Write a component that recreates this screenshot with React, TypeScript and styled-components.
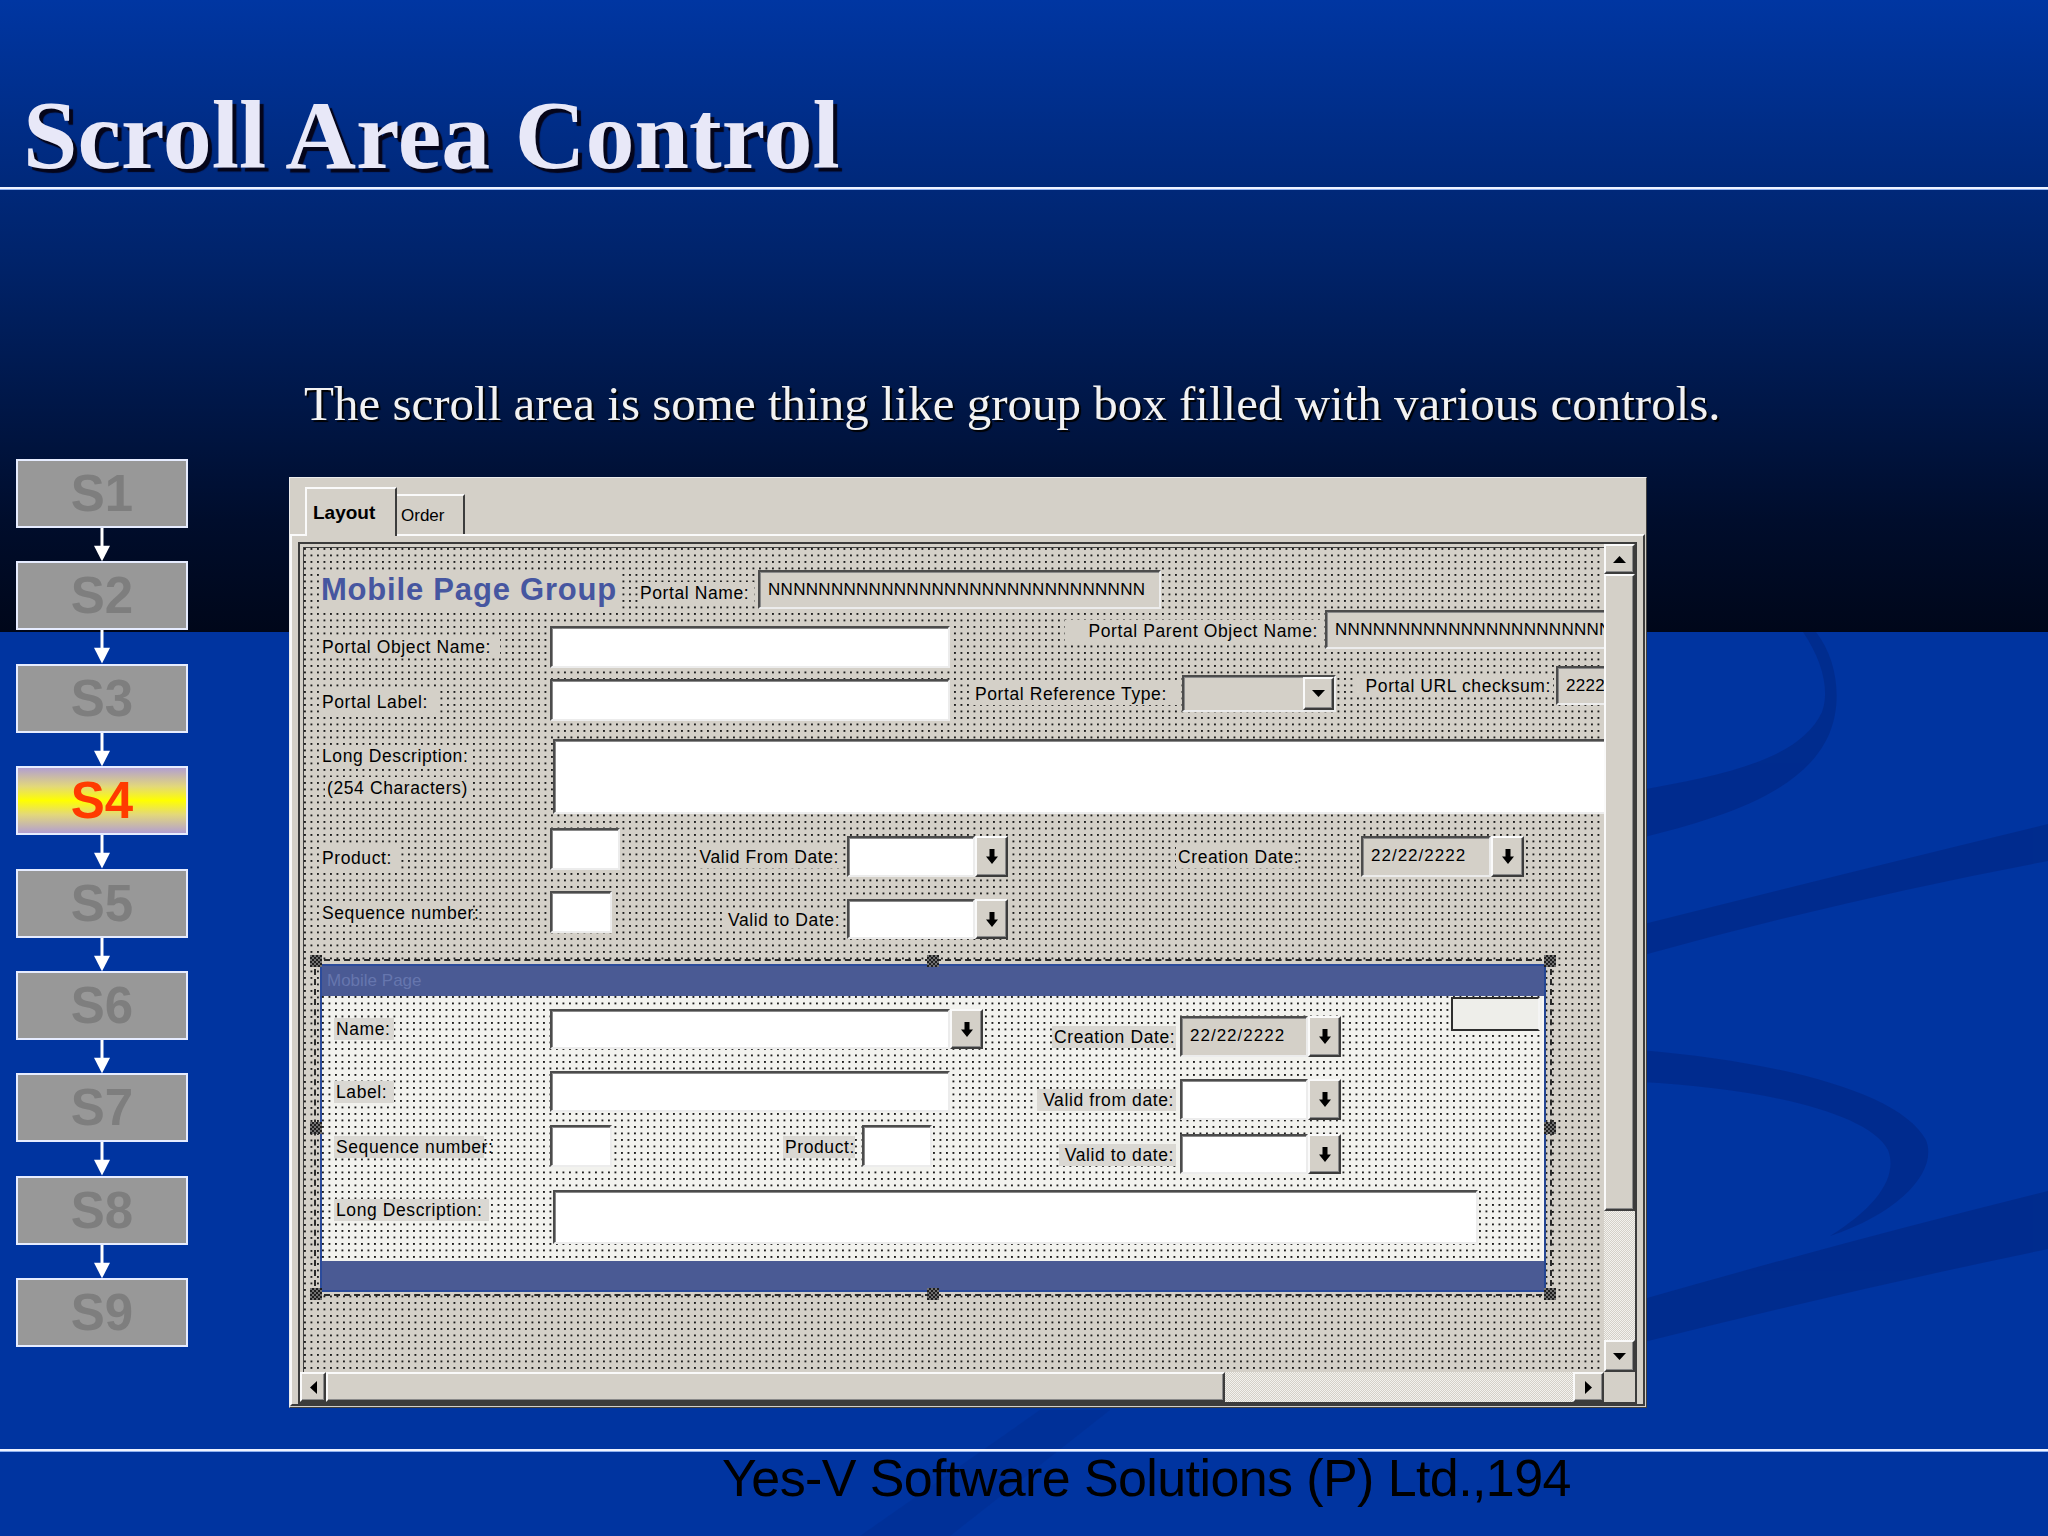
import React from 'react';
import styled, { createGlobalStyle, css } from 'styled-components';

const GRAY = '#d4d0c8';
const N30 = 'N'.repeat(30);

const GlobalStyle = createGlobalStyle`
  html, body {
    margin: 0;
    padding: 0;
    background: #0034a0;
  }
  body {
    font-family: "Liberation Sans", Arial, sans-serif;
  }
`;

const dotGrid = (base: string, dot: string) => css`
  background-color: ${dot};
  background-image:
    linear-gradient(90deg, transparent 0 1.4px, ${base} 1.4px),
    linear-gradient(180deg, transparent 0 1.4px, ${base} 1.4px);
  background-size: 6.5px 6.5px;
`;

const raised = css`
  box-sizing: border-box;
  background: ${GRAY};
  border: 2px solid;
  border-color: #fafafa #3c3c3c #3c3c3c #fafafa;
  box-shadow: inset -1px -1px 0 #8a8a8a;
`;

const sunken = css`
  box-sizing: border-box;
  border: 2px solid;
  border-color: #4c4c4c #ececec #ececec #4c4c4c;
  box-shadow: inset 1px 1px 0 #8a8a8a;
`;

const checker = css`
  background-color: #f3f2ee;
  background-image: conic-gradient(${GRAY} 25%, transparent 0 50%, ${GRAY} 0 75%, transparent 0);
  background-size: 2px 2px;
`;

type Place = { $ml?: number; $mt?: number; $w?: number; $h?: number };

const place = css<Place>`
  flex: none;
  margin-left: ${p => p.$ml ?? 0}px;
  margin-top: ${p => p.$mt ?? 0}px;
  ${p => (p.$w != null ? `width: ${p.$w}px;` : '')}
  ${p => (p.$h != null ? `height: ${p.$h}px;` : '')}
`;

/* ---------- slide frame ---------- */

const Page = styled.div`
  position: relative;
  width: 2048px;
  height: 1536px;
  overflow: hidden;
  background: linear-gradient(
    180deg,
    #0036a2 0px,
    #00236a 260px,
    #000d2c 520px,
    #00071a 632px,
    #0034a0 632px,
    #0034a0 100%
  );
`;

const Backdrop = styled.svg`
  position: absolute;
  left: 0;
  top: 0;
  width: 2048px;
  height: 1536px;
  z-index: 0;
  pointer-events: none;
`;

const Content = styled.div`
  position: relative;
  z-index: 1;
`;

const Title = styled.h1`
  margin: 0;
  padding: 86px 0 0 23px;
  height: 98px;
  font-family: "Liberation Serif", "Times New Roman", serif;
  font-size: 98px;
  line-height: 98px;
  font-weight: bold;
  letter-spacing: 0;
  color: #e8e8f8;
  text-shadow: 4px 4px 1px #05051a;
  white-space: nowrap;
`;

const Rule = styled.div<{ $top: number }>`
  margin-top: ${p => p.$top}px;
  height: 2px;
  background: #eef2ff;
  box-shadow: 0 1px 0 #8fb0ee;
`;

const Lead = styled.p`
  margin: 190px 0 0 304px;
  height: 49px;
  font-family: "Liberation Serif", "Times New Roman", serif;
  font-size: 49px;
  line-height: 49px;
  letter-spacing: 0;
  color: #f2f2f2;
  text-shadow: 2px 2px 1px #000;
  white-space: nowrap;
`;

const Main = styled.div`
  display: flex;
  align-items: flex-start;
  margin-top: 31px;
  padding-left: 16px;
`;

const Credit = styled.div`
  margin-top: 1px;
  padding-left: 722px;
  font-family: "Liberation Sans", Arial, sans-serif;
  font-size: 52px;
  line-height: 52px;
  letter-spacing: -0.6px;
  color: #000;
  white-space: nowrap;
`;

/* ---------- step ladder ---------- */

const Steps = styled.div`
  display: flex;
  flex-direction: column;
  flex: none;
  width: 172px;
`;

const StepBox = styled.div<{ $current?: boolean }>`
  box-sizing: border-box;
  height: 69px;
  border: 2px solid #e6ecff;
  background: ${p =>
    p.$current
      ? 'linear-gradient(180deg, #b29fd0 0%, #e2d77c 28%, #ffff00 50%, #e2d77c 72%, #b29fd0 100%)'
      : '#989898'};
  display: flex;
  align-items: center;
  justify-content: center;
  font-family: "Liberation Sans", Arial, sans-serif;
  font-weight: bold;
  font-size: 51px;
  color: ${p => (p.$current ? '#ff3a00' : '#7e7e7e')};
`;

const Connector = styled.svg`
  display: block;
  flex: none;
  width: 172px;
  height: 33.4px;
`;

/* ---------- dialog ---------- */

const Dialog = styled.div`
  flex: none;
  box-sizing: border-box;
  width: 1358px;
  height: 931px;
  margin: 18px 0 0 101px;
  padding: 9px 1px 1px 0;
  background: ${GRAY};
  border: 1px solid;
  border-color: #ececec #404040 #404040 #ececec;
  display: flex;
  flex-direction: column;
`;

const TabStrip = styled.div`
  display: flex;
  align-items: flex-end;
  height: 47px;
  margin-left: 15px;
  flex: none;
`;

const Tab = styled.div<{ $active?: boolean; $w: number }>`
  box-sizing: border-box;
  width: ${p => p.$w}px;
  height: ${p => (p.$active ? 49 : 40)}px;
  margin-bottom: ${p => (p.$active ? -2 : 0)}px;
  position: relative;
  z-index: ${p => (p.$active ? 1 : 0)};
  background: ${GRAY};
  border-top: 2px solid #fafafa;
  border-left: ${p => (p.$active ? '2px solid #fafafa' : 'none')};
  border-right: 2px solid #3c3c3c;
  padding: ${p => (p.$active ? '14px 0 0 6px' : '11px 0 0 4px')};
  font-size: ${p => (p.$active ? 19 : 17)}px;
  line-height: ${p => (p.$active ? 19 : 17)}px;
  font-weight: ${p => (p.$active ? 'bold' : 'normal')};
  color: #000;
`;

const TabPage = styled.div`
  flex: 1;
  min-height: 0;
  box-sizing: border-box;
  border: 2px solid;
  border-color: #fafafa #3c3c3c #3c3c3c #fafafa;
  padding: 6px 6px 0 6px;
  display: flex;
  flex-direction: column;
`;

const ScrollFrame = styled.div`
  flex: 1;
  min-height: 0;
  display: grid;
  grid-template-columns: 1fr 31px;
  grid-template-rows: 1fr 30px;
  border: 2px solid #3c3c3c;
`;

const Canvas = styled.div`
  min-width: 0;
  min-height: 0;
  overflow: hidden;
  box-sizing: border-box;
  padding: 3px 0 0 3px;
  background: ${GRAY};
`;

const Surface = styled.div`
  height: 100%;
  box-sizing: border-box;
  padding-top: 22px;
  border-top: 1px solid #404040;
  border-left: 1px solid #404040;
  ${dotGrid(GRAY, '#1c1c1c')};
`;

const Row = styled.div<{ $h: number }>`
  display: flex;
  align-items: flex-start;
  height: ${p => p.$h}px;
`;

const GroupTitle = styled.span<Place>`
  ${place};
  display: block;
  height: 40px;
  line-height: 40px;
  font-size: 31px;
  font-weight: bold;
  letter-spacing: 0.8px;
  color: #4656a0;
  background: ${GRAY};
  white-space: nowrap;
`;

const Label = styled.span<Place & { $right?: boolean; $tint?: string }>`
  ${place};
  display: block;
  box-sizing: border-box;
  height: 22px;
  padding: 0 2px;
  line-height: 22px;
  font-size: 17.5px;
  letter-spacing: 0.6px;
  color: #000;
  white-space: nowrap;
  text-align: ${p => (p.$right ? 'right' : 'left')};
  background: ${p => p.$tint ?? GRAY};
`;

const LabelStack = styled.div<Place>`
  ${place};
  display: flex;
  flex-direction: column;
  align-items: flex-start;
`;

const Field = styled.div<Place & { $tone?: 'white' | 'gray' }>`
  ${place};
  ${sunken};
  background: ${p => (p.$tone === 'gray' ? GRAY : '#fff')};
  padding-left: 8px;
  overflow: hidden;
  white-space: nowrap;
  display: flex;
  align-items: center;
  font-size: 17px;
  letter-spacing: 0.3px;
  color: #000;
`;

const ComboBox = styled(Field)`
  padding-left: 0;
  justify-content: flex-end;
`;

const DateText = styled.span`
  letter-spacing: 1px;
  margin-top: -2px;
`;

const PickerWrap = styled.div<Place>`
  ${place};
  display: flex;
`;

const DropBtn = styled.div<{ $w: number }>`
  ${raised};
  flex: none;
  width: ${p => p.$w}px;
  height: 100%;
  display: flex;
  align-items: center;
  justify-content: center;
`;

const SmallBox = styled.div<Place>`
  ${place};
  box-sizing: border-box;
  border: 2px solid #2e2e2e;
  border-right-color: #f4f4f4;
  background: #eeeeea;
`;

/* ---------- selected sub panel ---------- */

const Selection = styled.div<Place>`
  ${place};
  position: relative;
  box-sizing: border-box;
  width: 1238px;
  height: 337px;
  border: 2px dashed #2a2a2a;
`;

const Handle = styled.span<{ $x: number; $y: number }>`
  position: absolute;
  width: 12px;
  height: 12px;
  left: calc(${p => p.$x}% - 6px);
  top: calc(${p => p.$y}% - 6px);
  background: repeating-conic-gradient(#1e1e1e 0 25%, #707070 0 50%) 0 0 / 4px 4px;
`;

const PanelCard = styled.div`
  box-sizing: border-box;
  margin: 3px 0 0 4px;
  width: 1226px;
  height: 328px;
  border: 2px solid #2b4b9b;
  border-right-color: #264793;
  background: #4a5a94;
  display: flex;
  flex-direction: column;
`;

const PanelHeader = styled.div`
  flex: none;
  height: 30px;
  padding-left: 5px;
  line-height: 30px;
  font-size: 17px;
  color: #6676ae;
`;

const PanelBody = styled.div`
  flex: none;
  height: 265px;
  box-sizing: border-box;
  padding-top: 1px;
  border-right: 2px solid #f6f6f6;
  ${dotGrid('#f2f2ee', '#1c1c1c')};
`;

/* ---------- scroll bars ---------- */

const VBar = styled.div`
  min-height: 0;
  display: flex;
  flex-direction: column;
  ${checker};
`;

const HBar = styled.div`
  min-width: 0;
  display: flex;
  ${checker};
`;

const BarBtn = styled.div<{ $w: string; $h: string }>`
  ${raised};
  flex: none;
  width: ${p => p.$w};
  height: ${p => p.$h};
  display: flex;
  align-items: center;
  justify-content: center;
`;

const Thumb = styled.div<{ $w: string; $h: string }>`
  ${raised};
  flex: none;
  width: ${p => p.$w};
  height: ${p => p.$h};
`;

const Track = styled.div`
  flex: 1;
`;

const Corner = styled.div`
  background: ${GRAY};
`;

/* ---------- glyphs ---------- */

const ThickArrow = () => (
  <svg width="12" height="15" viewBox="0 0 12 15">
    <path d="M3.5 0h5v7.5h3.5l-6 7.5-6-7.5h3.5z" fill="#000" />
  </svg>
);

const Caret = ({ dir }: { dir: 'up' | 'down' | 'left' | 'right' }) => {
  const paths = {
    up: 'M0 7h13l-6.5-7z',
    down: 'M0 0h13l-6.5 7z',
    left: 'M7 0v13l-7-6.5z',
    right: 'M0 0v13l7-6.5z',
  };
  const vertical = dir === 'up' || dir === 'down';
  return (
    <svg width={vertical ? 13 : 7} height={vertical ? 7 : 13} viewBox={vertical ? '0 0 13 7' : '0 0 7 13'}>
      <path d={paths[dir]} fill="#000" />
    </svg>
  );
};

type PickerProps = {
  ml?: number;
  mt?: number;
  w: number;
  h: number;
  tone?: 'white' | 'gray';
  value?: string;
};

function Picker({ ml, mt, w, h, tone = 'white', value }: PickerProps) {
  return (
    <PickerWrap $ml={ml} $mt={mt} $h={h}>
      <Field $w={w} $h={h} $tone={tone}>
        {value && <DateText>{value}</DateText>}
      </Field>
      <DropBtn $w={33}>
        <ThickArrow />
      </DropBtn>
    </PickerWrap>
  );
}

const steps = ['S1', 'S2', 'S3', 'S4', 'S5', 'S6', 'S7', 'S8', 'S9'];
const handles: Array<[number, number]> = [
  [0, 0], [50, 0], [100, 0],
  [0, 50], [100, 50],
  [0, 100], [50, 100], [100, 100],
];
const INNER = '#dad8d3';

export default function App() {
  return (
    <Page>
      <GlobalStyle />
      <Backdrop viewBox="0 0 2048 1536">
        <g fill="#002a8a" opacity="0.8">
          <path d="M1640 790 C1720 776 1800 760 1822 712 C1830 690 1822 660 1803 632 L1816 632 C1838 660 1842 702 1830 732 C1806 792 1722 818 1640 838 Z" />
          <path d="M1640 925 Q1850 872 2048 824 L2048 861 Q1850 898 1640 956 Z" />
          <path d="M1640 1050 C1780 1062 1900 1092 1926 1140 C1938 1170 1902 1212 1830 1236 C1878 1206 1898 1176 1888 1150 C1868 1112 1760 1088 1640 1082 Z" />
          <path d="M1640 1300 Q1850 1240 2048 1191 L2048 1249 Q1850 1290 1640 1343 Z" />
        </g>
        <path d="M860 1536 L1040 1410 L1110 1410 L950 1536 Z" fill="#002a8a" opacity="0.35" />
      </Backdrop>

      <Content>
        <Title>Scroll Area Control</Title>
        <Rule $top={3} />
        <Lead>The scroll area is some thing like group box filled with various controls.</Lead>

        <Main>
          <Steps>
            {steps.map((s, i) => (
              <React.Fragment key={s}>
                <StepBox $current={s === 'S4'}>{s}</StepBox>
                {i < steps.length - 1 && (
                  <Connector viewBox="0 0 172 34" preserveAspectRatio="none">
                    <line x1="86" y1="0" x2="86" y2="19" stroke="#fff" strokeWidth="3" />
                    <polygon points="78,18 94,18 86,34" fill="#fff" />
                  </Connector>
                )}
              </React.Fragment>
            ))}
          </Steps>

          <Dialog>
            <TabStrip>
              <Tab $active $w={92}>Layout</Tab>
              <Tab $w={68}>Order</Tab>
            </TabStrip>
            <TabPage>
              <ScrollFrame>
                <Canvas>
                  <Surface>
                    <Row $h={40}>
                      <GroupTitle $ml={17} $w={300}>Mobile Page Group</GroupTitle>
                      <Label $ml={17} $mt={12} $w={116}>Portal Name:</Label>
                      <Field $ml={4} $w={403} $h={39} $tone="gray">{N30}</Field>
                    </Row>
                    <Row $h={56}>
                      <Label $ml={16} $mt={26} $w={180}>Portal Object Name:</Label>
                      <Field $ml={50} $mt={16} $w={400} $h={42} />
                      <Label $ml={115} $mt={10} $w={255} $right>Portal Parent Object Name:</Label>
                      <Field $ml={5} $w={320} $h={39} $tone="gray">{N30}</Field>
                    </Row>
                    <Row $h={73}>
                      <Label $ml={16} $mt={25} $w={120}>Portal Label:</Label>
                      <Field $ml={110} $mt={13} $w={400} $h={42} />
                      <Label $ml={23} $mt={17} $w={205}>Portal Reference Type:</Label>
                      <ComboBox $ml={4} $mt={9} $w={154} $h={37} $tone="gray">
                        <DropBtn $w={31}>
                          <Caret dir="down" />
                        </DropBtn>
                      </ComboBox>
                      <Label $ml={21} $mt={9} $w={196} $right>Portal URL checksum:</Label>
                      <Field $ml={3} $w={100} $h={39} $tone="gray">2222</Field>
                    </Row>
                    <Row $h={89}>
                      <LabelStack $ml={16} $w={180}>
                        <Label $mt={6}>Long Description:</Label>
                        <Label $ml={5} $mt={10}>(254 Characters)</Label>
                      </LabelStack>
                      <Field $ml={53} $w={1100} $h={75} />
                    </Row>
                    <Row $h={63}>
                      <Label $ml={16} $mt={19} $w={80}>Product:</Label>
                      <Field $ml={150} $w={70} $h={42} />
                      <Label $ml={76} $mt={18} $w={145} $right>Valid From Date:</Label>
                      <Picker ml={6} mt={8} w={128} h={41} />
                      <Label $ml={168} $mt={18} $w={122} $right>Creation Date:</Label>
                      <Picker ml={63} mt={8} w={130} h={41} tone="gray" value="22/22/2222" />
                    </Row>
                    <Row $h={68}>
                      <Label $ml={16} $mt={11} $w={150}>Sequence number:</Label>
                      <Field $ml={80} $w={62} $h={42} />
                      <Label $ml={114} $mt={18} $w={115} $right>Valid to Date:</Label>
                      <Picker ml={6} mt={8} w={128} h={40} />
                    </Row>

                    <Selection $ml={10}>
                      {handles.map(([x, y]) => (
                        <Handle key={`${x}-${y}`} $x={x} $y={y} />
                      ))}
                      <PanelCard>
                        <PanelHeader>Mobile Page</PanelHeader>
                        <PanelBody>
                          <Row $h={74}>
                            <Label $ml={12} $mt={21} $w={60} $tint={INNER}>Name:</Label>
                            <Picker ml={156} mt={12} w={400} h={40} />
                            <Label $ml={69} $mt={29} $w={124} $right $tint={INNER}>Creation Date:</Label>
                            <Picker ml={4} mt={19} w={128} h={41} tone="gray" value="22/22/2222" />
                            <SmallBox $ml={110} $w={89} $h={34} />
                          </Row>
                          <Row $h={54}>
                            <Label $ml={12} $mt={10} $w={60} $tint={INNER}>Label:</Label>
                            <Field $ml={156} $w={400} $h={41} />
                            <Label $ml={87} $mt={18} $w={139} $right $tint={INNER}>Valid from date:</Label>
                            <Picker ml={4} mt={8} w={128} h={41} />
                          </Row>
                          <Row $h={65}>
                            <Label $ml={12} $mt={11} $w={150} $tint={INNER}>Sequence number:</Label>
                            <Field $ml={66} $w={62} $h={42} />
                            <Label $ml={171} $mt={11} $w={72} $tint={INNER}>Product:</Label>
                            <Field $ml={7} $w={70} $h={42} />
                            <Label $ml={127} $mt={19} $w={117} $right $tint={INNER}>Valid to date:</Label>
                            <Picker ml={4} mt={9} w={128} h={40} />
                          </Row>
                          <Row $h={60}>
                            <Label $ml={12} $mt={9} $w={155} $tint={INNER}>Long Description:</Label>
                            <Field $ml={64} $w={925} $h={54} />
                          </Row>
                        </PanelBody>
                      </PanelCard>
                    </Selection>
                  </Surface>
                </Canvas>

                <VBar>
                  <BarBtn $w="100%" $h="30px">
                    <Caret dir="up" />
                  </BarBtn>
                  <Thumb $w="100%" $h="637px" />
                  <Track />
                  <BarBtn $w="100%" $h="32px">
                    <Caret dir="down" />
                  </BarBtn>
                </VBar>

                <HBar>
                  <BarBtn $w="26px" $h="100%">
                    <Caret dir="left" />
                  </BarBtn>
                  <Thumb $w="899px" $h="100%" />
                  <Track />
                  <BarBtn $w="31px" $h="100%">
                    <Caret dir="right" />
                  </BarBtn>
                </HBar>

                <Corner />
              </ScrollFrame>
            </TabPage>
          </Dialog>
        </Main>

        <Rule $top={41} />
        <Credit>Yes-V Software Solutions (P) Ltd.,194</Credit>
      </Content>
    </Page>
  );
}
